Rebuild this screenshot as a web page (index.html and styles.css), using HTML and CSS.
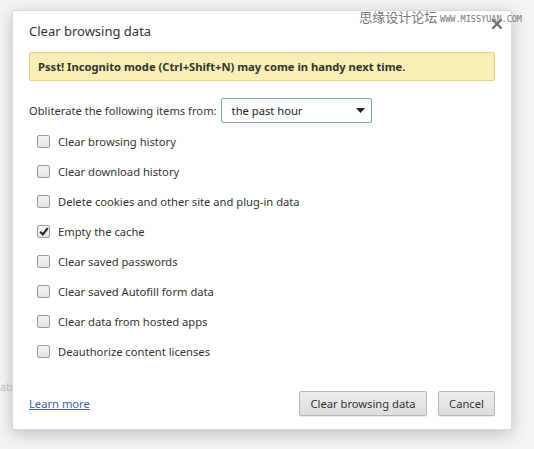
FILE: index.html
```html
<!DOCTYPE html>
<html>
<head>
<meta charset="utf-8">
<link rel="stylesheet" href="styles.css">
</head>
<body>
<div class="page">
  <div class="watermark">思缘设计论坛 <span class="wm-en">WWW.MISSYUAN.COM</span></div>
  <div class="behind">ab</div>
  <div class="dialog">
    <div class="close">
      <svg width="10" height="10" viewBox="0 0 10 10"><path d="M1 1 L9 9 M9 1 L1 9" stroke="#6b6b6b" stroke-width="2.2" stroke-linecap="square"/></svg>
    </div>
    <h1 class="title">Clear browsing data</h1>
    <div class="banner">Psst! Incognito mode (Ctrl+Shift+N) may come in handy next time.</div>
    <div class="period">
      <span class="period-label">Obliterate the following items from:</span>
      <div class="select">
        <span>the past hour</span>
        <svg width="9" height="5" viewBox="0 0 9 5"><path d="M0 0 H9 L4.5 5 Z" fill="#222"/></svg>
      </div>
    </div>
    <ul class="items">
      <li><span class="box"></span>Clear browsing history</li>
      <li><span class="box"></span>Clear download history</li>
      <li><span class="box"></span>Delete cookies and other site and plug-in data</li>
      <li><span class="box checked"><svg width="10" height="9" viewBox="0 0 10 9"><path d="M1.2 4.8 L3.8 7.4 L8.8 1.2" fill="none" stroke="#222" stroke-width="2"/></svg></span>Empty the cache</li>
      <li><span class="box"></span>Clear saved passwords</li>
      <li><span class="box"></span>Clear saved Autofill form data</li>
      <li><span class="box"></span>Clear data from hosted apps</li>
      <li><span class="box"></span>Deauthorize content licenses</li>
    </ul>
    <div class="footer">
      <a class="learn" href="#">Learn more</a>
      <div class="buttons">
        <button class="btn btn-clear">Clear browsing data</button>
        <button class="btn btn-cancel">Cancel</button>
      </div>
    </div>
  </div>
</div>
</body>
</html>
```

FILE: styles.css
```css
* { box-sizing: border-box; }
html, body { margin: 0; padding: 0; }
body {
  width: 534px;
  height: 449px;
  background: #f4f4f4;
  font-family: "Noto Sans", "Open Sans", sans-serif;
  font-size: 11.2px;
  color: #333;
  overflow: hidden;
}
.page {
  position: relative;
  width: 534px;
  height: 449px;
  padding: 10px 0 0 12px;
}
.watermark {
  position: absolute;
  top: 7px;
  right: 12px;
  font-size: 13px;
  color: #777;
  font-family: "Noto Sans CJK SC", sans-serif;
  z-index: 2;
}
.wm-en {
  font-family: "DejaVu Sans Mono", monospace;
  font-size: 8.5px;
  letter-spacing: 0;
}
.behind {
  position: absolute;
  left: 0;
  top: 379px;
  color: #c8c8c8;
  font-size: 11px;
}
.dialog {
  position: relative;
  width: 500px;
  height: 420px;
  background: #fff;
  border: 1px solid #d9d9d9;
  border-radius: 2px;
  box-shadow: 0 4px 16px rgba(0,0,0,0.22);
  padding: 0 16px 0 16px;
  display: flex;
  flex-direction: column;
}
.close {
  position: absolute;
  top: 8px;
  right: 9px;
  width: 10px;
  height: 10px;
  line-height: 0;
}
.title {
  margin: 9px 0 0 0;
  font-weight: normal;
  font-size: 13px;
  color: #333;
  height: 22px;
  line-height: 22px;
}
.banner {
  margin-top: 10px;
  height: 29px;
  background: #f9eeb5;
  border: 1px solid #e4d186;
  border-radius: 2px;
  padding: 0 8px;
  line-height: 27px;
  font-weight: bold;
  color: #333;
}
.period {
  display: flex;
  align-items: center;
  margin-top: 17px;
  height: 25px;
}
.period-label { margin-right: 4px; }
.select {
  width: 151px;
  height: 25px;
  border: 1px solid #7a9dc9;
  border-radius: 2px;
  display: flex;
  align-items: center;
  justify-content: space-between;
  padding: 0 6px 0 10px;
  color: #222;
  background: #fff;
}
.items {
  list-style: none;
  margin: 3px 0 0 0;
  padding: 0 0 0 8px;
}
.items li {
  height: 30px;
  display: flex;
  align-items: center;
  color: #333;
}
.box {
  width: 13px;
  height: 13px;
  border: 1px solid #9a9a9a;
  border-radius: 2px;
  background: linear-gradient(#f3f3f3, #e4e4e4);
  margin-right: 8px;
  display: flex;
  align-items: center;
  justify-content: center;
}
.footer {
  margin-top: auto;
  margin-bottom: 13px;
  display: flex;
  align-items: center;
  justify-content: space-between;
}
.learn {
  color: #3b5fa8;
  text-decoration: underline;
}
.buttons { display: flex; gap: 11px; }
.btn {
  font-family: inherit;
  font-size: 11.2px;
  color: #333;
  height: 25px;
  padding: 0;
  border: 1px solid #b5b5b5;
  border-radius: 2px;
  background: linear-gradient(#ededed, #dedede);
  box-shadow: 0 1px 0 rgba(0,0,0,0.08);
}
.btn-clear { width: 128px; }
.btn-cancel { width: 57px; }
```
